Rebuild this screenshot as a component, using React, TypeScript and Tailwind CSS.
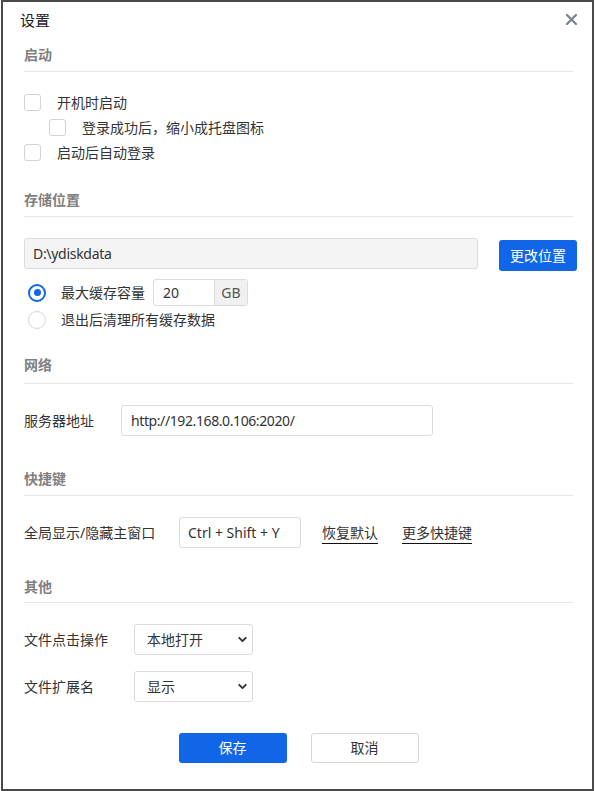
import { ChevronDown } from "lucide-react"

function Checkbox() {
    return <span className="block size-[17px] shrink-0 rounded-[3px] border-[1.5px] border-[#d4d4d4] bg-white" />
}

function Radio({ checked }: { checked?: boolean }) {
    return checked ? (
        <span className="flex size-[18px] shrink-0 items-center justify-center rounded-full border-2 border-[#1166e8]">
            <span className="size-[7px] rounded-full bg-[#1166e8]" />
        </span>
    ) : (
        <span className="block size-[18px] shrink-0 rounded-full border-[1.5px] border-[#d8d8d8]" />
    )
}

function SectionTitle({ title, className }: { title: string; className: string }) {
    return (
        <div className={`mr-[4px] border-b border-[#e6e6e6] font-bold leading-[20px] text-[#7f7f7f] ${className}`}>
            {title}
        </div>
    )
}

function Select({ value }: { value: string }) {
    return (
        <div className="flex h-[31px] w-[119px] items-center justify-between rounded-[3px] border border-[#dcdcdc] bg-white pl-[12px] pr-[3px]">
            <span>{value}</span>
            <ChevronDown className="size-[13px] text-[#333]" strokeWidth={3.6} />
        </div>
    )
}

export default function App() {
    return (
        <div
            className="ml-[1px] h-[791px] w-[593px] border-2 border-[#4a4a4a] bg-white text-[14px] leading-[20px] text-[#333]"
            style={{ fontFamily: '"Noto Sans", "Noto Sans CJK SC", sans-serif' }}
        >
            <div className="flex h-[36px] items-center justify-between pl-[17px] pr-[15px]">
                <span className="text-[15px] text-[#222]">设置</span>
                <svg width="11" height="11" viewBox="0 0 11 11" className="mt-[-2px]">
                    <path d="M1 1L10 10M10 1L1 10" stroke="#7b7f8e" strokeWidth="2.2" strokeLinecap="round" />
                </svg>
            </div>

            <div className="pl-[21px] pr-[15px]">
                <SectionTitle title="启动" className="mt-[7px] pb-[6px]" />
                <div className="mt-[18px]">
                    <div className="flex h-[25px] items-center gap-[16px]">
                        <Checkbox />
                        <span>开机时启动</span>
                    </div>
                    <div className="flex h-[25px] items-center gap-[16px] pl-[25px]">
                        <Checkbox />
                        <span>登录成功后，缩小成托盘图标</span>
                    </div>
                    <div className="flex h-[25px] items-center gap-[16px]">
                        <Checkbox />
                        <span>启动后自动登录</span>
                    </div>
                </div>

                <SectionTitle title="存储位置" className="mt-[25px] pb-[6px]" />
                <div className="mt-[21px] flex items-start gap-[21px]">
                    <div className="flex h-[31px] w-[454px] items-center rounded-[3px] border border-[#dcdcdc] bg-[#f4f4f4] pl-[8px] tracking-[-0.3px]">
                        D:\ydiskdata
                    </div>
                    <button className="mt-[2px] h-[31px] w-[78px] rounded-[3px] bg-[#1166e8] text-white">更改位置</button>
                </div>
                <div className="mt-[8px] flex h-[27px] items-center pl-[4px]">
                    <Radio checked />
                    <span className="ml-[15px]">最大缓存容量</span>
                    <div className="ml-[8px] flex h-[27px] rounded-[3px] border border-[#dcdcdc]">
                        <span className="flex w-[60px] items-center pl-[9px]">20</span>
                        <span className="flex w-[33px] items-center justify-center border-l border-[#dcdcdc] bg-[#f0f0f0] text-[#555]">GB</span>
                    </div>
                </div>
                <div className="flex h-[28px] items-center pl-[4px]">
                    <Radio />
                    <span className="ml-[15px]">退出后清理所有缓存数据</span>
                </div>

                <SectionTitle title="网络" className="mt-[21px] pb-[8px]" />
                <div className="mt-[21px] flex h-[31px] items-center">
                    <span className="w-[97px]">服务器地址</span>
                    <div className="flex h-[31px] w-[312px] items-center rounded-[3px] border border-[#dcdcdc] pl-[9px] tracking-[-0.4px]">
                        http://192.168.0.106:2020/
                    </div>
                </div>

                <SectionTitle title="快捷键" className="mt-[33px] pb-[6px]" />
                <div className="mt-[21px] flex h-[31px] items-center">
                    <span className="w-[155px]">全局显示/隐藏主窗口</span>
                    <div className="flex h-[31px] w-[122px] items-center rounded-[3px] border border-[#dcdcdc] pl-[8px]">
                        Ctrl + Shift + Y
                    </div>
                    <span className="ml-[21px] underline decoration-[#111] underline-offset-[5px]">恢复默认</span>
                    <span className="ml-[24px] underline decoration-[#111] underline-offset-[5px]">更多快捷键</span>
                </div>

                <SectionTitle title="其他" className="mt-[29px] pb-[5px]" />
                <div className="mt-[21px] flex items-center">
                    <span className="w-[110px]">文件点击操作</span>
                    <Select value="本地打开" />
                </div>
                <div className="mt-[16px] flex items-center">
                    <span className="w-[110px]">文件扩展名</span>
                    <Select value="显示" />
                </div>

                <div className="mt-[31px] flex justify-center gap-[24px] pr-[4px]">
                    <button className="h-[30px] w-[108px] rounded-[3px] bg-[#1166e8] text-white">保存</button>
                    <button className="h-[30px] w-[108px] rounded-[3px] border border-[#d8d8d8] bg-white text-[#333]">取消</button>
                </div>
            </div>
        </div>
    )
}
